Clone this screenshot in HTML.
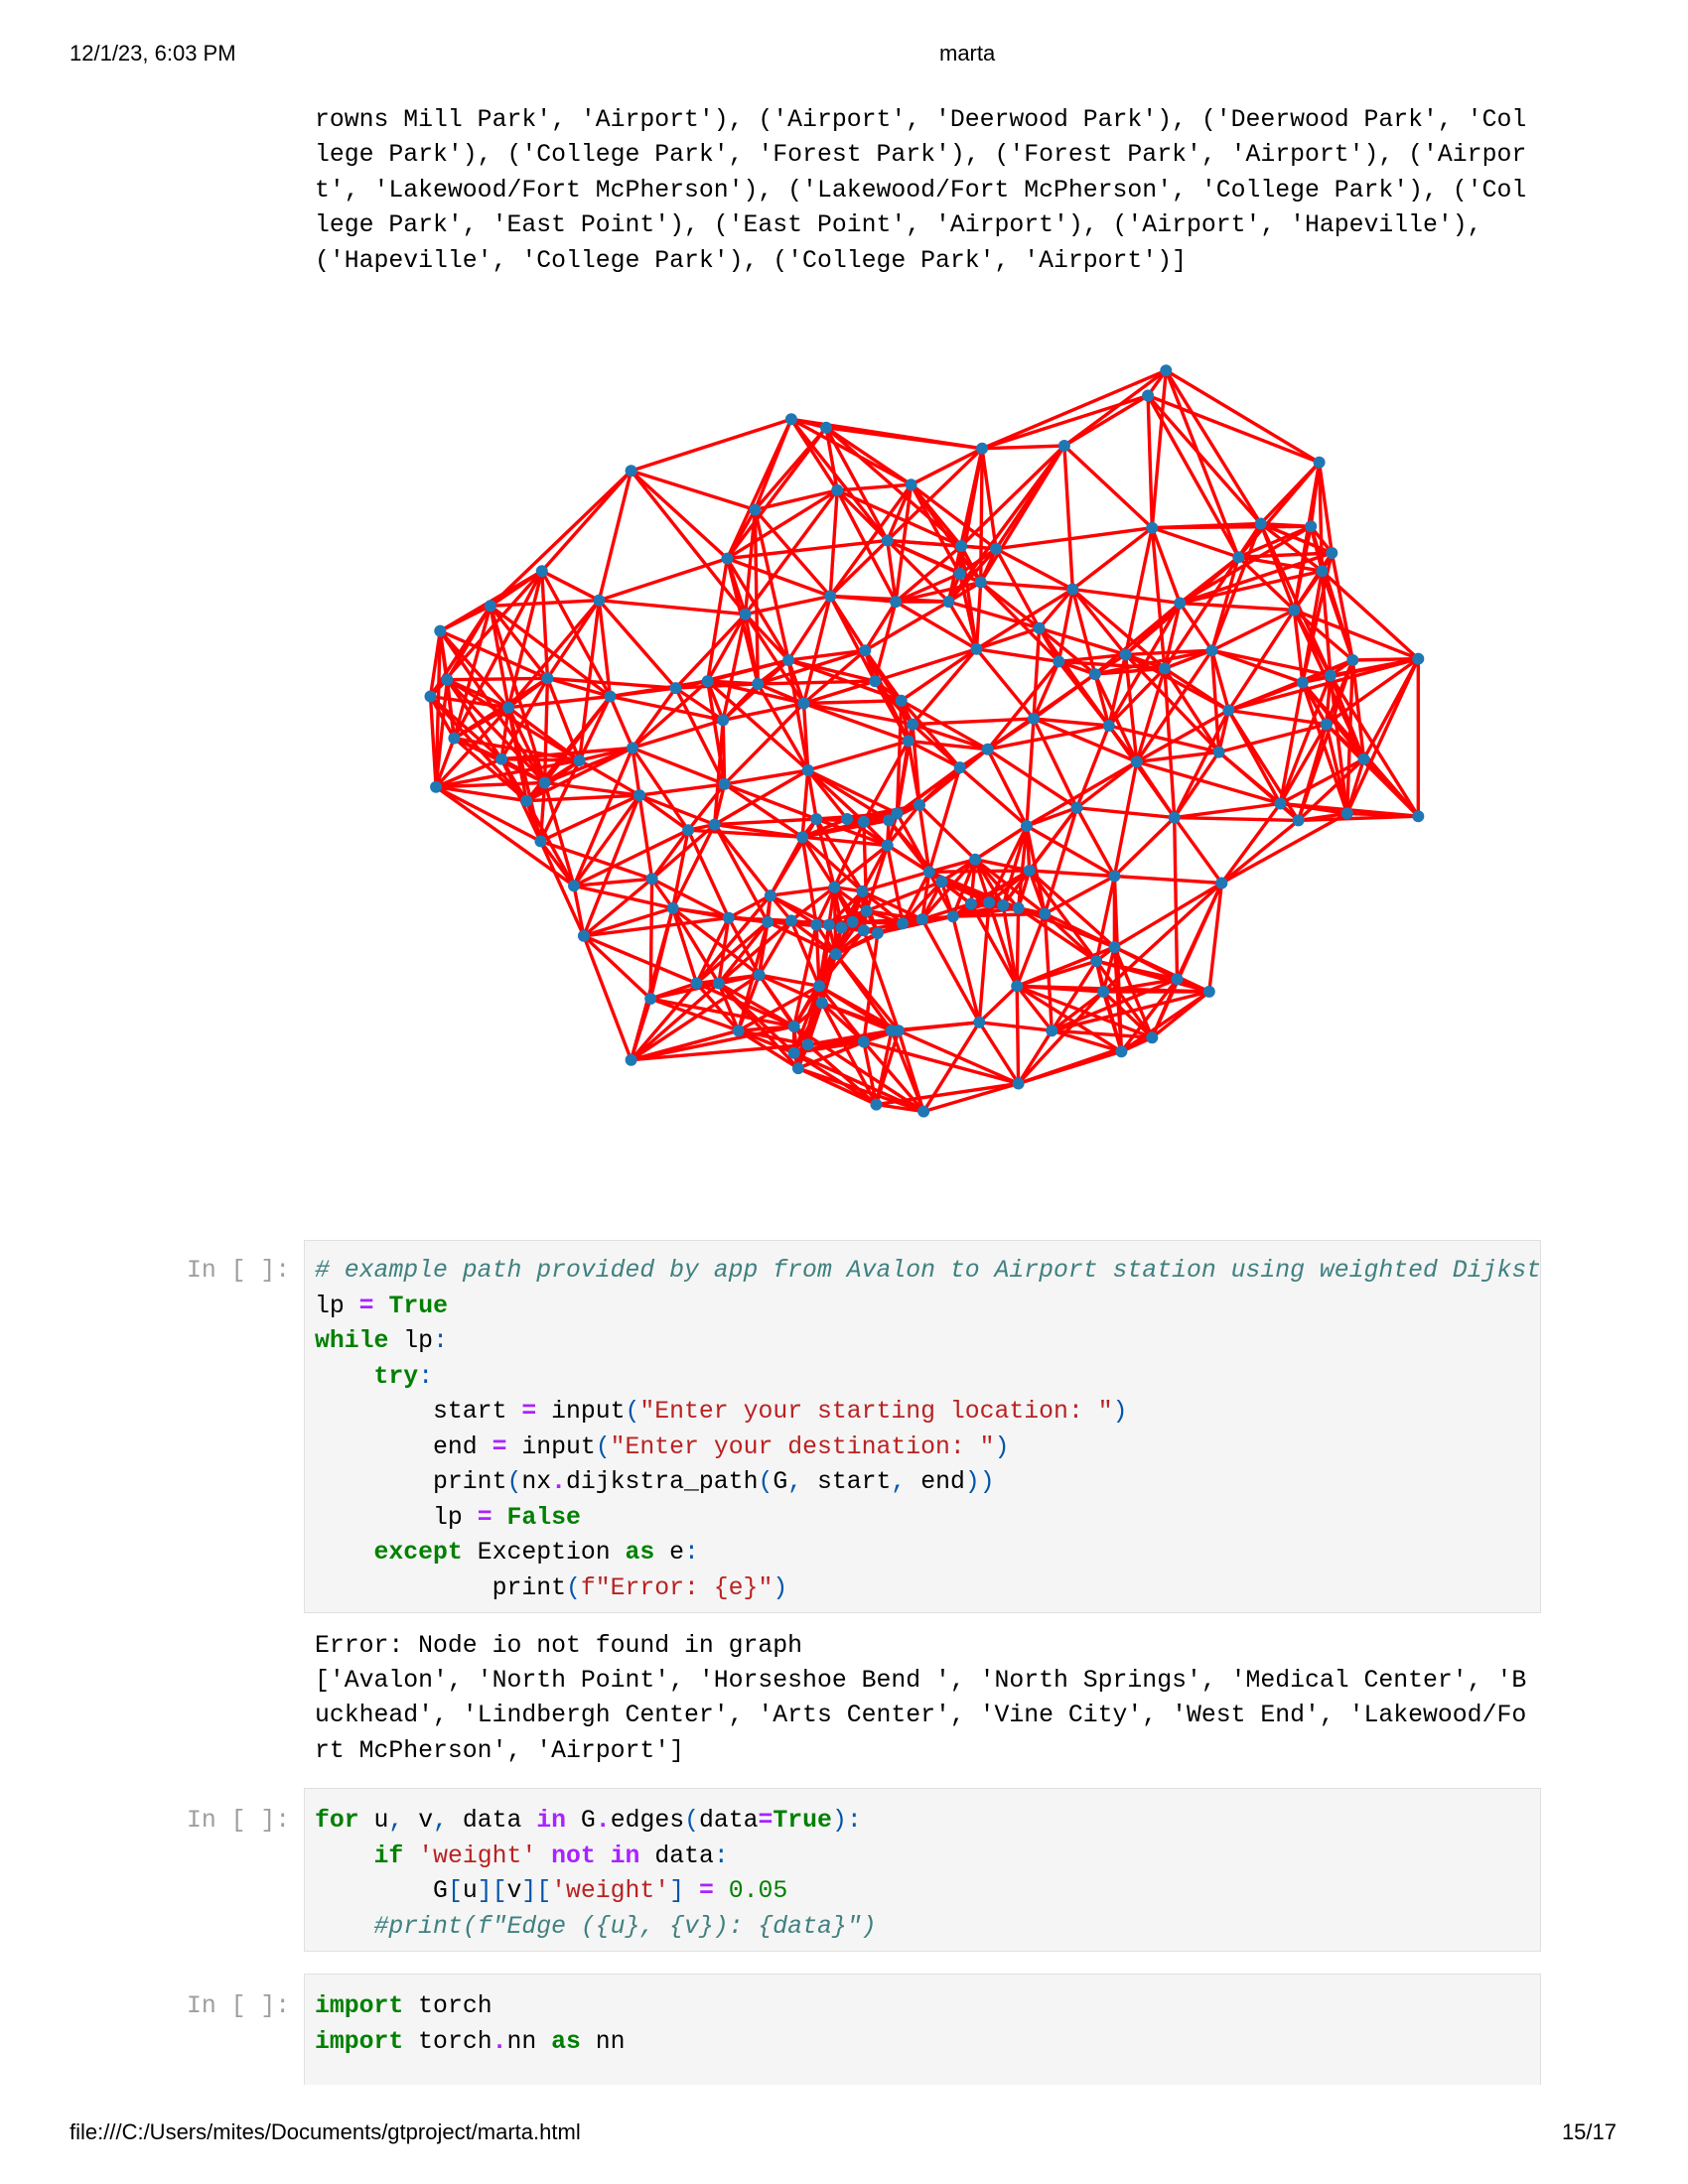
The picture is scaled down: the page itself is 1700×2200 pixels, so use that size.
<!DOCTYPE html>
<html><head><meta charset="utf-8">
<style>
html,body{margin:0;padding:0;background:#fff;}
body{width:1700px;height:2200px;position:relative;overflow:hidden;font-family:"Liberation Sans",sans-serif;}
.hdr{position:absolute;font-size:22px;color:#000;line-height:26px;}
.m{position:absolute;font-family:"Liberation Mono",monospace;font-size:24.8px;line-height:36px;white-space:pre;color:#000;}
.box{position:absolute;background:#f5f5f5;border:1.5px solid #e0e0e0;overflow:hidden;}
.p{color:#9e9e9e;}
.k{color:#008000;font-weight:bold;}
.o{color:#aa22ff;font-weight:bold;}
.s{color:#ba2121;}
.c{color:#408080;font-style:italic;}
.b{color:#0055aa;}
.n{color:#008000;}
</style></head><body>
<div class="hdr" style="left:70px;top:41px;">12/1/23, 6:03 PM</div>
<div class="hdr" style="left:946px;top:41px;">marta</div>

<div class="m" style="left:317px;top:103px;">rowns Mill Park', 'Airport'), ('Airport', 'Deerwood Park'), ('Deerwood Park', 'Col</div>
<div class="m" style="left:317px;top:138px;">lege Park'), ('College Park', 'Forest Park'), ('Forest Park', 'Airport'), ('Airpor</div>
<div class="m" style="left:317px;top:174px;">t', 'Lakewood/Fort McPherson'), ('Lakewood/Fort McPherson', 'College Park'), ('Col</div>
<div class="m" style="left:317px;top:209px;">lege Park', 'East Point'), ('East Point', 'Airport'), ('Airport', 'Hapeville'),</div>
<div class="m" style="left:317px;top:245px;">('Hapeville', 'College Park'), ('College Park', 'Airport')]</div>

<svg id="g" style="position:absolute;left:0;top:0;" width="1700" height="1200"></svg>

<div class="box" style="left:306px;top:1249px;width:1244px;height:374px;"></div>
<div class="m p" style="left:188px;top:1262px;">In [ ]:</div>
<div style="position:absolute;left:307px;top:1250px;width:1243px;height:372px;overflow:hidden;">
<div class="m" style="left:10px;top:12px;"><span class="c"># example path provided by app from Avalon to Airport station using weighted Dijkstra's algorithm</span></div>
<div class="m" style="left:10px;top:48px;">lp <span class="o">=</span> <span class="k">True</span></div>
<div class="m" style="left:10px;top:83px;"><span class="k">while</span> lp<span class="b">:</span></div>
<div class="m" style="left:10px;top:119px;">    <span class="k">try</span><span class="b">:</span></div>
<div class="m" style="left:10px;top:154px;">        start <span class="o">=</span> input<span class="b">(</span><span class="s">"Enter your starting location: "</span><span class="b">)</span></div>
<div class="m" style="left:10px;top:190px;">        end <span class="o">=</span> input<span class="b">(</span><span class="s">"Enter your destination: "</span><span class="b">)</span></div>
<div class="m" style="left:10px;top:225px;">        print<span class="b">(</span>nx<span class="o">.</span>dijkstra_path<span class="b">(</span>G<span class="b">,</span> start<span class="b">,</span> end<span class="b">))</span></div>
<div class="m" style="left:10px;top:261px;">        lp <span class="o">=</span> <span class="k">False</span></div>
<div class="m" style="left:10px;top:296px;">    <span class="k">except</span> Exception <span class="k">as</span> e<span class="b">:</span></div>
<div class="m" style="left:10px;top:332px;">            print<span class="b">(</span><span class="s">f"Error: {e}"</span><span class="b">)</span></div>
</div>

<div class="m" style="left:317px;top:1640px;">Error: Node io not found in graph</div>
<div class="m" style="left:317px;top:1675px;">['Avalon', 'North Point', 'Horseshoe Bend ', 'North Springs', 'Medical Center', 'B</div>
<div class="m" style="left:317px;top:1710px;">uckhead', 'Lindbergh Center', 'Arts Center', 'Vine City', 'West End', 'Lakewood/Fo</div>
<div class="m" style="left:317px;top:1746px;">rt McPherson', 'Airport']</div>

<div class="box" style="left:306px;top:1801px;width:1244px;height:163px;"></div>
<div class="m p" style="left:188px;top:1816px;">In [ ]:</div>
<div class="m" style="left:317px;top:1816px;"><span class="k">for</span> u<span class="b">,</span> v<span class="b">,</span> data <span class="o">in</span> G<span class="o">.</span>edges<span class="b">(</span>data<span class="o">=</span><span class="k">True</span><span class="b">):</span></div>
<div class="m" style="left:317px;top:1852px;">    <span class="k">if</span> <span class="s">'weight'</span> <span class="o">not</span> <span class="o">in</span> data<span class="b">:</span></div>
<div class="m" style="left:317px;top:1887px;">        G<span class="b">[</span>u<span class="b">][</span>v<span class="b">][</span><span class="s">'weight'</span><span class="b">]</span> <span class="o">=</span> <span class="n">0.05</span></div>
<div class="m" style="left:317px;top:1923px;">    <span class="c">#print(f"Edge ({u}, {v}): {data}")</span></div>

<div class="box" style="left:306px;top:1988px;width:1244px;height:120px;border-bottom:none;"></div>
<div class="m p" style="left:188px;top:2003px;">In [ ]:</div>
<div class="m" style="left:317px;top:2003px;"><span class="k">import</span> torch</div>
<div class="m" style="left:317px;top:2039px;"><span class="k">import</span> torch<span class="o">.</span>nn <span class="k">as</span> nn</div>

<div style="position:absolute;left:0;top:2100px;width:1700px;height:100px;background:#fff;"></div>
<div class="hdr" style="left:70px;top:2135px;">file:///C:/Users/mites/Documents/gtproject/marta.html</div>
<div class="hdr" style="right:72px;top:2135px;">15/17</div>

<script>
(function(){
var P=[[837,266],[824,284],[947,332],[568,301],[593,307],[705,322],[764,320],[453,338],[601,352],[654,348],[542,366],[637,388],[690,392],[715,394],[689,412],[827,379],[905,376],[941,378],[889,400],[949,410],[956,397],[522,401],[389,410],[430,431],[352,435],[316,453],[535,441],[596,428],[643,432],[681,432],[704,418],[770,423],[847,433],[929,438],[746,451],[566,474],[621,467],[701,466],[760,475],[808,470],[870,467],[836,480],[786,484],[971,474],[1018,473],[935,490],[955,485],[309,500],[321,488],[393,487],[438,500],[485,494],[508,489],[544,491],[628,489],[365,508],[519,517],[577,505],[647,503],[655,520],[652,532],[742,516],[796,521],[882,510],[952,520],[326,530],[360,545],[416,546],[454,537],[580,553],[689,551],[709,538],[816,547],[875,540],[979,545],[313,565],[391,562],[378,575],[459,571],[520,563],[660,578],[773,580],[843,587],[919,577],[932,589],[967,584],[1018,586],[388,604],[494,596],[513,592],[576,601],[586,588],[608,588],[620,590],[638,589],[644,584],[637,607],[737,593],[739,625],[800,629],[877,634],[412,636],[468,631],[553,643],[599,637],[619,640],[667,626],[676,633],[700,617],[710,648],[622,654],[483,652],[419,672],[523,659],[551,662],[568,661],[586,664],[595,664],[604,666],[612,662],[620,668],[630,670],[648,663],[662,660],[684,658],[697,649],[720,650],[731,652],[750,656],[600,685],[588,708],[590,720],[545,700],[500,706],[516,706],[467,717],[640,740],[570,737],[580,750],[530,740],[730,708],[787,690],[800,680],[792,712],[845,703],[868,712],[755,740],[703,734],[827,745],[805,755],[645,740],[453,761],[570,756],[573,767],[629,793],[663,798],[731,778],[620,748]];
var S=1.403;P=P.map(function(p){return [p[0]*S,p[1]*S];});
var n=P.length,E={},out='';
function d(a,b){var x=P[a][0]-P[b][0],y=P[a][1]-P[b][1];return Math.sqrt(x*x+y*y);}
for(var i=0;i<n;i++){
 var arr=[];for(var j=0;j<n;j++)if(j!=i)arr.push([d(i,j),j]);
 arr.sort(function(a,b){return a[0]-b[0];});
 var k=0;
 for(var t=0;t<arr.length&&k<7;t++){
   var j=arr[t][1];
   if(arr[t][0]>230)break;
   var key=i<j?i+'_'+j:j+'_'+i;E[key]=1;k++;
 }
 for(var t=8;t<14&&t<arr.length;t+=3){var j=arr[t][1];if(arr[t][0]<200){var key=i<j?i+'_'+j:j+'_'+i;E[key]=1;}}
}
for(var key in E){var ab=key.split('_');var a=P[+ab[0]],b=P[+ab[1]];
 out+='<line x1="'+a[0].toFixed(1)+'" y1="'+a[1].toFixed(1)+'" x2="'+b[0].toFixed(1)+'" y2="'+b[1].toFixed(1)+'"/>';}
var c='';for(var i=0;i<n;i++)c+='<circle cx="'+P[i][0].toFixed(1)+'" cy="'+P[i][1].toFixed(1)+'" r="6"/>';
document.getElementById('g').innerHTML='<g stroke="#ff0000" stroke-width="3.4" stroke-linecap="round">'+out+'</g><g fill="#1f77b4">'+c+'</g>';
})();
</script>
</body></html>
